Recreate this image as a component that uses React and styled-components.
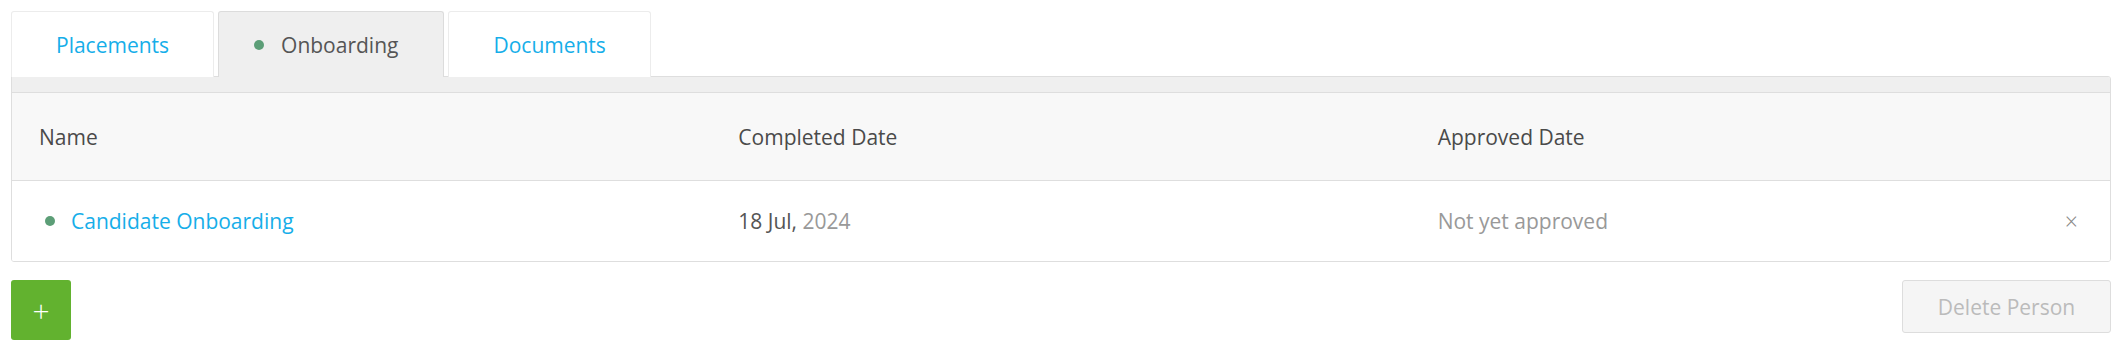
import styled, { createGlobalStyle } from "styled-components";

const Global = createGlobalStyle`
  body {
    margin: 0;
    background: #fff;
    font-family: "Open Sans", "Liberation Sans", sans-serif;
  }
`;

const Page = styled.div`
  padding: 11px 7px 0 11px;
`;

const Tabs = styled.nav`
  display: flex;
  gap: 4px;
`;

const Tab = styled.div`
  display: flex;
  align-items: center;
  height: 66px;
  box-sizing: border-box;
  padding: ${(p) => (p.$active ? "0 45px 0 35px" : "0 44px")};
  margin-bottom: -1px;
  border: 1px solid ${(p) => (p.$active ? "#dcdcdc" : "#ececec")};
  border-bottom: none;
  border-radius: 3px 3px 0 0;
  background: ${(p) => (p.$active ? "#efefef" : "#fff")};
  color: ${(p) => (p.$active ? "#555" : "#16aee9")};
  font-size: 21px;
  position: relative;
  z-index: 1;
`;

const Dot = styled.span`
  display: inline-block;
  width: 10px;
  height: 10px;
  border-radius: 50%;
  background: #5c9e77;
  margin-left: ${(p) => p.$indent || 0}px;
  margin-right: ${(p) => p.$gap || 17}px;
`;

const Panel = styled.section`
  border: 1px solid #dedede;
  border-radius: 0 3px 3px 3px;
  overflow: hidden;
`;

const Band = styled.div`
  height: 15px;
  background: #efefef;
  border-bottom: 1px solid #dedede;
`;

const Row = styled.div`
  display: grid;
  grid-template-columns: 1fr 1fr 1fr;
  align-items: center;
  height: ${(p) => (p.$head ? 87 : 80)}px;
  background: ${(p) => (p.$head ? "#f8f8f8" : "#fff")};
  border-bottom: ${(p) => (p.$head ? "1px solid #dedede" : "none")};
  font-size: 21px;
  color: ${(p) => (p.$head ? "#4a4a4a" : "#555")};
`;

const Cell = styled.div`
  display: flex;
  align-items: center;
  justify-content: ${(p) => (p.$spread ? "space-between" : "flex-start")};
  padding: 0 32px 0 27px;
`;

const Link = styled.a`
  color: #16aee9;
  text-decoration: none;
`;

const Muted = styled.span`
  color: #999;
`;

const Close = styled.span`
  color: #888;
  font-size: 23px;
  font-weight: 300;
  line-height: 1;
`;

const Actions = styled.div`
  display: flex;
  justify-content: space-between;
  align-items: flex-start;
  margin-top: 18px;
`;

const AddButton = styled.button`
  width: 60px;
  height: 60px;
  border: none;
  border-radius: 3px;
  background: #62b22f;
  color: #fff;
  font-family: inherit;
  font-size: 30px;
  font-weight: 300;
  padding: 0;
`;

const DeleteButton = styled.button`
  width: 209px;
  height: 53px;
  border: 1px solid #dddddd;
  border-radius: 3px;
  background: #f5f5f5;
  color: #bbb;
  font-family: inherit;
  font-size: 21px;
`;

export default function App() {
  return (
    <Page>
      <Global />
      <Tabs>
        <Tab>Placements</Tab>
        <Tab $active>
          <Dot />
          Onboarding
        </Tab>
        <Tab>Documents</Tab>
      </Tabs>
      <Panel>
        <Band />
        <Row $head>
          <Cell>Name</Cell>
          <Cell>Completed Date</Cell>
          <Cell>Approved Date</Cell>
        </Row>
        <Row>
          <Cell>
            <Dot $indent={6} $gap={16} />
            <Link href="#">Candidate Onboarding</Link>
          </Cell>
          <Cell>
            18 Jul,&nbsp;<Muted>2024</Muted>
          </Cell>
          <Cell $spread>
            <Muted>Not yet approved</Muted>
            <Close>×</Close>
          </Cell>
        </Row>
      </Panel>
      <Actions>
        <AddButton>+</AddButton>
        <DeleteButton disabled>Delete Person</DeleteButton>
      </Actions>
    </Page>
  );
}
